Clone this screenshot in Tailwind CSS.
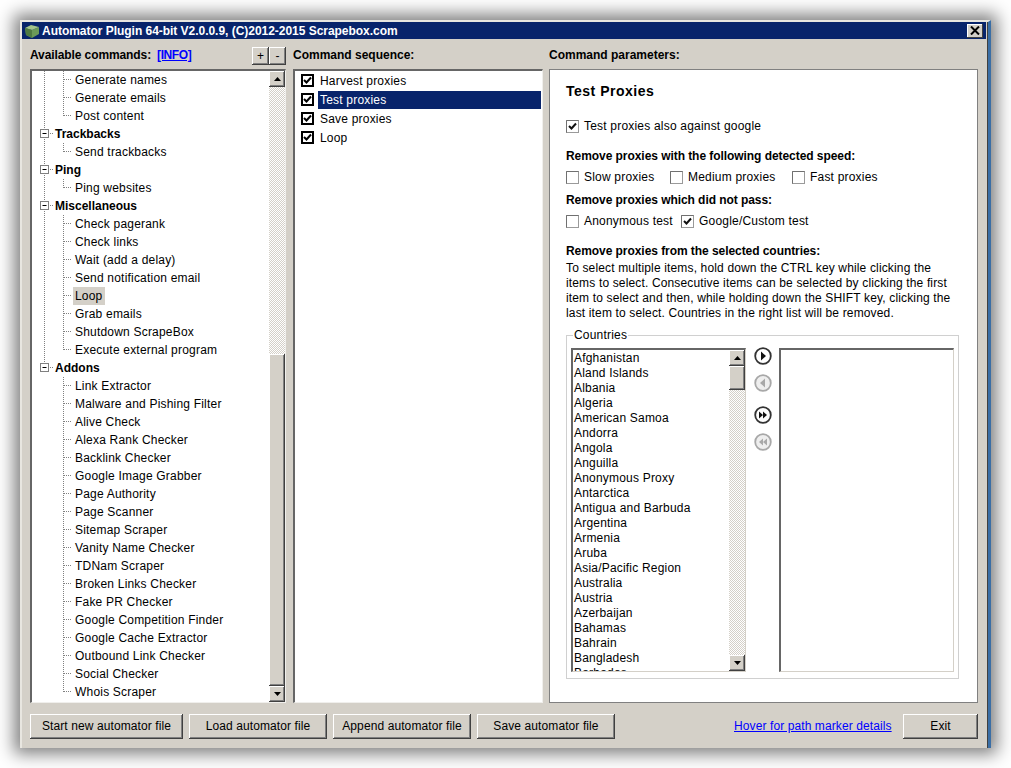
<!DOCTYPE html>
<html lang="en">

<head>
  <meta charset="UTF-8" />
  <title>Automator Plugin</title>
  <script src="https://cdn.jsdelivr.net/npm/@tailwindcss/browser@4"></script>
</head>

<body class="h-[768px] pt-[20px] pl-[20px] bg-white font-['Liberation_Sans',sans-serif] text-[12px] tracking-[0.2px] text-black">
  <div class="w-[971px] h-[728px] flex flex-col bg-[#d4d0c8] border-r-[3px] border-r-[#3a6ea5] border-t-2 border-l-2 border-t-[#e8e6e0] border-l-[#e8e6e0] shadow-[0_0_16px_6px_rgba(0,0,0,0.5),inset_-1px_0_0_#404040]">

    <!-- title bar -->
    <div class="h-[17px] w-[964px] bg-[#08246b] flex items-center pl-[1px] pr-[3px] text-white font-bold text-[12px] tracking-[-0.03px]">
      <svg width="18" height="14" viewBox="0 0 18 14">
        <path d="M2 4 L9 6 L16 3 L16 10 L9 14 L3 11 Z" fill="#6b9a58" />
        <path d="M2 4 L8 1 L16 3 L9 6 Z" fill="#a4c48a" />
        <path d="M9 6 L9 14 L3 11 L2 4 Z" fill="#4f7a42" />
      </svg>
      <span class="ml-[1px]">Automator Plugin 64-bit V2.0.0.9, (C)2012-2015 Scrapebox.com</span>
      <button class="ml-auto w-[16px] h-[14px] bg-[#d4d0c8] flex items-center justify-center shadow-[inset_-1px_-1px_0_#404040,inset_1px_1px_0_#fff]">
        <svg width="10" height="9" viewBox="0 0 10 9"><path d="M1 0.5 L9 8.5 M9 0.5 L1 8.5" stroke="#000" stroke-width="2" /></svg>
      </button>
    </div>

    <!-- three columns -->
    <div class="flex pl-[8px]">
      <!-- available commands -->
      <div class="w-[256px]">
        <div class="h-[30px] pt-[2px] flex items-center font-bold">
          <span class="tracking-[-0.1px]">Available commands:</span>
          <a class="ml-[6px] text-[#0000ff] underline tracking-[-0.4px]">[INFO]</a>
          <button class="ml-auto mt-[2px] w-[17px] h-[18px] bg-[#d4d0c8] shadow-[inset_-1px_-1px_0_#404040,inset_1px_1px_0_#fff,inset_-2px_-2px_0_#808080] font-normal">+</button>
          <button class="mt-[2px] w-[17px] h-[18px] bg-[#d4d0c8] shadow-[inset_-1px_-1px_0_#404040,inset_1px_1px_0_#fff,inset_-2px_-2px_0_#808080] font-normal">-</button>
        </div>
        <div class="h-[634px] flex bg-white border-t-2 border-l-2 border-r border-b border-t-[#666] border-l-[#666] border-r-[#f0efec] border-b-[#f0efec]">
          <div id="tree" class="flex-1 pl-[1px] overflow-hidden"></div>
          <div class="w-[16px] flex flex-col">
            <button class="h-[16px] flex items-center justify-center bg-[#d4d0c8] shadow-[inset_-1px_-1px_0_#404040,inset_1px_1px_0_#fff,inset_-2px_-2px_0_#808080]">
              <svg width="7" height="4"><path d="M3.5 0 L7 4 L0 4 Z" /></svg>
            </button>
            <div class="flex-1 bg-[repeating-conic-gradient(#d4d0c8_0_25%,#fff_0_50%)] bg-[length:2px_2px]"></div>
            <div class="h-[332px] bg-[#d4d0c8] shadow-[inset_-1px_-1px_0_#404040,inset_1px_1px_0_#fff,inset_-2px_-2px_0_#808080]"></div>
            <button class="h-[16px] flex items-center justify-center bg-[#d4d0c8] shadow-[inset_-1px_-1px_0_#404040,inset_1px_1px_0_#fff,inset_-2px_-2px_0_#808080]">
              <svg width="7" height="4"><path d="M0 0 L7 0 L3.5 4 Z" /></svg>
            </button>
          </div>
        </div>
      </div>

      <!-- command sequence -->
      <div class="w-[250px] ml-[7px]">
        <div class="h-[30px] pt-[2px] flex items-center font-bold tracking-normal">Command sequence:</div>
        <div id="sequence" class="h-[634px] bg-white pl-[6px] pr-[1px] border-t-2 border-l-2 border-r border-b border-t-[#666] border-l-[#666] border-r-[#f0efec] border-b-[#f0efec]"></div>
      </div>

      <!-- command parameters -->
      <div class="w-[429px] ml-[6px]">
        <div class="h-[30px] pt-[2px] flex items-center font-bold tracking-normal">Command parameters:</div>
        <div class="h-[634px] bg-white border border-[#808080] pl-[16px] pr-[19px] pt-[11px]">
          <h1 class="h-[20px] flex items-center font-bold text-[14px] tracking-[0.5px]">Test Proxies</h1>

          <label class="mt-[17px] h-[16px] flex items-center">
            <svg class="mr-[5px]" width="13" height="13"><use href="#box-on" /></svg>Test proxies also against google
          </label>

          <h2 class="mt-[14px] h-[16px] flex items-center font-bold tracking-[-0.06px]">Remove proxies with the following detected speed:</h2>
          <div class="mt-[5px] h-[16px] flex items-center">
            <svg class="mr-[5px]" width="13" height="13"><use href="#box-off" /></svg><span class="w-[86px]">Slow proxies</span>
            <svg class="mr-[5px]" width="13" height="13"><use href="#box-off" /></svg><span class="w-[104px]">Medium proxies</span>
            <svg class="mr-[5px]" width="13" height="13"><use href="#box-off" /></svg><span>Fast proxies</span>
          </div>

          <h2 class="mt-[7px] h-[16px] flex items-center font-bold tracking-[-0.06px]">Remove proxies which did not pass:</h2>
          <div class="mt-[5px] h-[16px] flex items-center">
            <svg class="mr-[5px]" width="13" height="13"><use href="#box-off" /></svg><span class="w-[97px]">Anonymous test</span>
            <svg class="mr-[5px]" width="13" height="13"><use href="#box-on" /></svg><span>Google/Custom test</span>
          </div>

          <h2 class="mt-[14px] h-[16px] flex items-center font-bold tracking-[-0.06px]">Remove proxies from the selected countries:</h2>
          <p class="leading-[15px] mt-[2px] whitespace-nowrap tracking-[0.15px]">To select multiple items, hold down the CTRL key while clicking the<br />items to select. Consecutive items can be selected by clicking the first<br />item to select and then, while holding down the SHIFT key, clicking the<br />last item to select. Countries in the right list will be removed.</p>

          <fieldset class="mt-[7px] w-[393px] h-[351px] border border-[#d0d0d0] pl-[4px] pr-[4px]">
            <legend class="ml-[2px] px-[1px] h-[14px] leading-[14px]">Countries</legend>
            <div class="mt-[6px] flex">
              <div class="w-[175px] h-[324px] flex bg-white border-t-2 border-l-2 border-r border-b border-t-[#666] border-l-[#666] border-r-[#d4d0c8] border-b-[#d4d0c8]">
                <div id="countries" class="flex-1 pt-[1px] pl-[1px] overflow-hidden"></div>
                <div class="w-[16px] flex flex-col">
                  <button class="h-[16px] flex items-center justify-center bg-[#d4d0c8] shadow-[inset_-1px_-1px_0_#404040,inset_1px_1px_0_#fff,inset_-2px_-2px_0_#808080]">
                    <svg width="7" height="4"><path d="M3.5 0 L7 4 L0 4 Z" /></svg>
                  </button>
                  <div class="h-[24px] bg-[#d4d0c8] shadow-[inset_-1px_-1px_0_#404040,inset_1px_1px_0_#fff,inset_-2px_-2px_0_#808080]"></div>
                  <div class="flex-1 bg-[repeating-conic-gradient(#d4d0c8_0_25%,#fff_0_50%)] bg-[length:2px_2px]"></div>
                  <button class="h-[16px] flex items-center justify-center bg-[#d4d0c8] shadow-[inset_-1px_-1px_0_#404040,inset_1px_1px_0_#fff,inset_-2px_-2px_0_#808080]">
                    <svg width="7" height="4"><path d="M0 0 L7 0 L3.5 4 Z" /></svg>
                  </button>
                </div>
              </div>
              <div class="w-[33px] flex flex-col items-center">
                <svg class="mt-[-1px]" width="18" height="18" viewBox="0 0 18 18"><circle cx="9" cy="9" r="7.8" fill="#fff" stroke="#333" stroke-width="1.8" /><path d="M7 4.5 L12 9 L7 13.5 Z" fill="#111" /></svg>
                <svg class="mt-[9px]" width="18" height="18" viewBox="0 0 18 18"><circle cx="9" cy="9" r="7.8" fill="#eee" stroke="#a8a8a8" stroke-width="1.8" /><path d="M11 4.5 L6 9 L11 13.5 Z" fill="#a8a8a8" /></svg>
                <svg class="mt-[14px]" width="18" height="18" viewBox="0 0 18 18"><circle cx="9" cy="9" r="7.8" fill="#fff" stroke="#333" stroke-width="1.8" /><path d="M5 5.5 L9 9 L5 12.5 Z M9 5.5 L13 9 L9 12.5 Z" fill="#111" /></svg>
                <svg class="mt-[9px]" width="18" height="18" viewBox="0 0 18 18"><circle cx="9" cy="9" r="7.8" fill="#eee" stroke="#a8a8a8" stroke-width="1.8" /><path d="M9 5.5 L5 9 L9 12.5 Z M13 5.5 L9 9 L13 12.5 Z" fill="#a8a8a8" /></svg>
              </div>
              <div class="w-[175px] h-[324px] bg-white border-t-2 border-l-2 border-r border-b border-t-[#666] border-l-[#666] border-r-[#d4d0c8] border-b-[#d4d0c8]"></div>
            </div>
          </fieldset>
        </div>
      </div>
    </div>

    <!-- bottom buttons -->
    <div class="mt-[11px] pl-[8px] flex items-center tracking-[0.1px]">
      <button class="w-[153px] h-[25px] pb-[1px] bg-[#d4d0c8] shadow-[inset_-1px_-1px_0_#404040,inset_1px_1px_0_#fff,inset_-2px_-2px_0_#808080]">Start new automator file</button>
      <button class="ml-[6px] w-[138px] h-[25px] pb-[1px] bg-[#d4d0c8] shadow-[inset_-1px_-1px_0_#404040,inset_1px_1px_0_#fff,inset_-2px_-2px_0_#808080]">Load automator file</button>
      <button class="ml-[6px] w-[138px] h-[25px] pb-[1px] bg-[#d4d0c8] shadow-[inset_-1px_-1px_0_#404040,inset_1px_1px_0_#fff,inset_-2px_-2px_0_#808080]">Append automator file</button>
      <button class="ml-[6px] w-[138px] h-[25px] pb-[1px] bg-[#d4d0c8] shadow-[inset_-1px_-1px_0_#404040,inset_1px_1px_0_#fff,inset_-2px_-2px_0_#808080]">Save automator file</button>
      <a class="ml-[119px] w-[169px] text-[#0000ff] pb-[1px]"><span class="underline">Hover for path marker details</span></a>
      <button class="w-[75px] h-[25px] pb-[1px] bg-[#d4d0c8] shadow-[inset_-1px_-1px_0_#404040,inset_1px_1px_0_#fff,inset_-2px_-2px_0_#808080]">Exit</button>
    </div>
  </div>

  <!-- checkbox shapes -->
  <svg width="0" height="0" class="absolute">
    <symbol id="box-off" viewBox="0 0 13 13">
      <rect x="0.5" y="0.5" width="12" height="12" fill="#fff" stroke="#9a9a9a" />
      <path d="M0.5 12.5 V0.5 H12.5" fill="none" stroke="#707070" />
    </symbol>
    <symbol id="box-on" viewBox="0 0 13 13">
      <rect x="0.5" y="0.5" width="12" height="12" fill="#fff" stroke="#9a9a9a" />
      <path d="M0.5 12.5 V0.5 H12.5" fill="none" stroke="#707070" />
      <path d="M3 6 L5.5 8.5 L10 3.5" fill="none" stroke="#111" stroke-width="2" />
    </symbol>
  </svg>

  <script>
    // command tree, [name, section] - sections are bold and have the minus box
    const commands = [
      ["Generate names"], ["Generate emails"], ["Post content", 0, 1],
      ["Trackbacks", 1], ["Send trackbacks", 0, 1],
      ["Ping", 1], ["Ping websites", 0, 1],
      ["Miscellaneous", 1], ["Check pagerank"], ["Check links"], ["Wait (add a delay)"],
      ["Send notification email"], ["Loop"], ["Grab emails"], ["Shutdown ScrapeBox"],
      ["Execute external program", 0, 1],
      ["Addons", 1], ["Link Extractor"], ["Malware and Pishing Filter"], ["Alive Check"],
      ["Alexa Rank Checker"], ["Backlink Checker"], ["Google Image Grabber"], ["Page Authority"],
      ["Page Scanner"], ["Sitemap Scraper"], ["Vanity Name Checker"], ["TDNam Scraper"],
      ["Broken Links Checker"], ["Fake PR Checker"], ["Google Competition Finder"],
      ["Google Cache Extractor"], ["Outbound Link Checker"], ["Social Checker"], ["Whois Scraper", 0, 1]
    ]

    const dots = 'stroke="#808080" stroke-dasharray="1 1"'
    let afterAddons = false
    let treeHtml = ""
    commands.forEach(([name, section, last]) => {
      if (name === "Addons") afterAddons = true
      if (section) {
        treeHtml += `<div class="h-[18px] flex items-center font-bold tracking-normal">
          <svg class="shrink-0" width="22" height="18">
            <path d="M11.5 0 V4" ${dots} />
            ${afterAddons ? "" : `<path d="M11.5 14 V18" ${dots} />`}
            <rect x="7.5" y="4.5" width="8" height="8" fill="#fff" stroke="#808080" />
            <path d="M9.5 8.5 H13.5" stroke="#000" />
            <path d="M17 8.5 H21" ${dots} />
          </svg>${name}</div>`
      } else {
        treeHtml += `<div class="h-[18px] flex items-center">
          <svg class="shrink-0" width="40" height="18">
            ${afterAddons ? "" : `<path d="M11.5 0 V18" ${dots} />`}
            <path d="M30.5 0 V${last ? 9 : 18}" ${dots} />
            <path d="M31 8.5 H39" ${dots} />
          </svg><span class="px-[2px] leading-[18px] ${name === "Loop" ? "bg-[#d4d0c8]" : ""}">${name}</span></div>`
      }
    })
    document.getElementById("tree").innerHTML = treeHtml

    // command sequence list
    const sequence = ["Harvest proxies", "Test proxies", "Save proxies", "Loop"]
    document.getElementById("sequence").innerHTML = sequence.map(name => `
      <div class="h-[19px] flex items-center">
        <svg class="shrink-0" width="13" height="13" viewBox="0 0 13 13">
          <rect x="1" y="1" width="11" height="11" fill="#fff" stroke="#000" stroke-width="2" />
          <path d="M3 6 L5.5 8.5 L10 3.5" fill="none" stroke="#000" stroke-width="2" />
        </svg>
        <span class="ml-[4px] flex-1 px-[2px] leading-[18px] ${name === "Test proxies" ? "bg-[#08246b] text-white" : ""}">${name}</span>
      </div>`).join("")

    // country list, clipped by the listbox
    const countries = ["Afghanistan", "Aland Islands", "Albania", "Algeria", "American Samoa", "Andorra", "Angola", "Anguilla",
      "Anonymous Proxy", "Antarctica", "Antigua and Barbuda", "Argentina", "Armenia", "Aruba", "Asia/Pacific Region", "Australia",
      "Austria", "Azerbaijan", "Bahamas", "Bahrain", "Bangladesh", "Barbados"]
    document.getElementById("countries").innerHTML = countries.map(name =>
      `<div class="h-[15px] leading-[15px] whitespace-nowrap">${name}</div>`).join("")
  </script>
</body>

</html>
